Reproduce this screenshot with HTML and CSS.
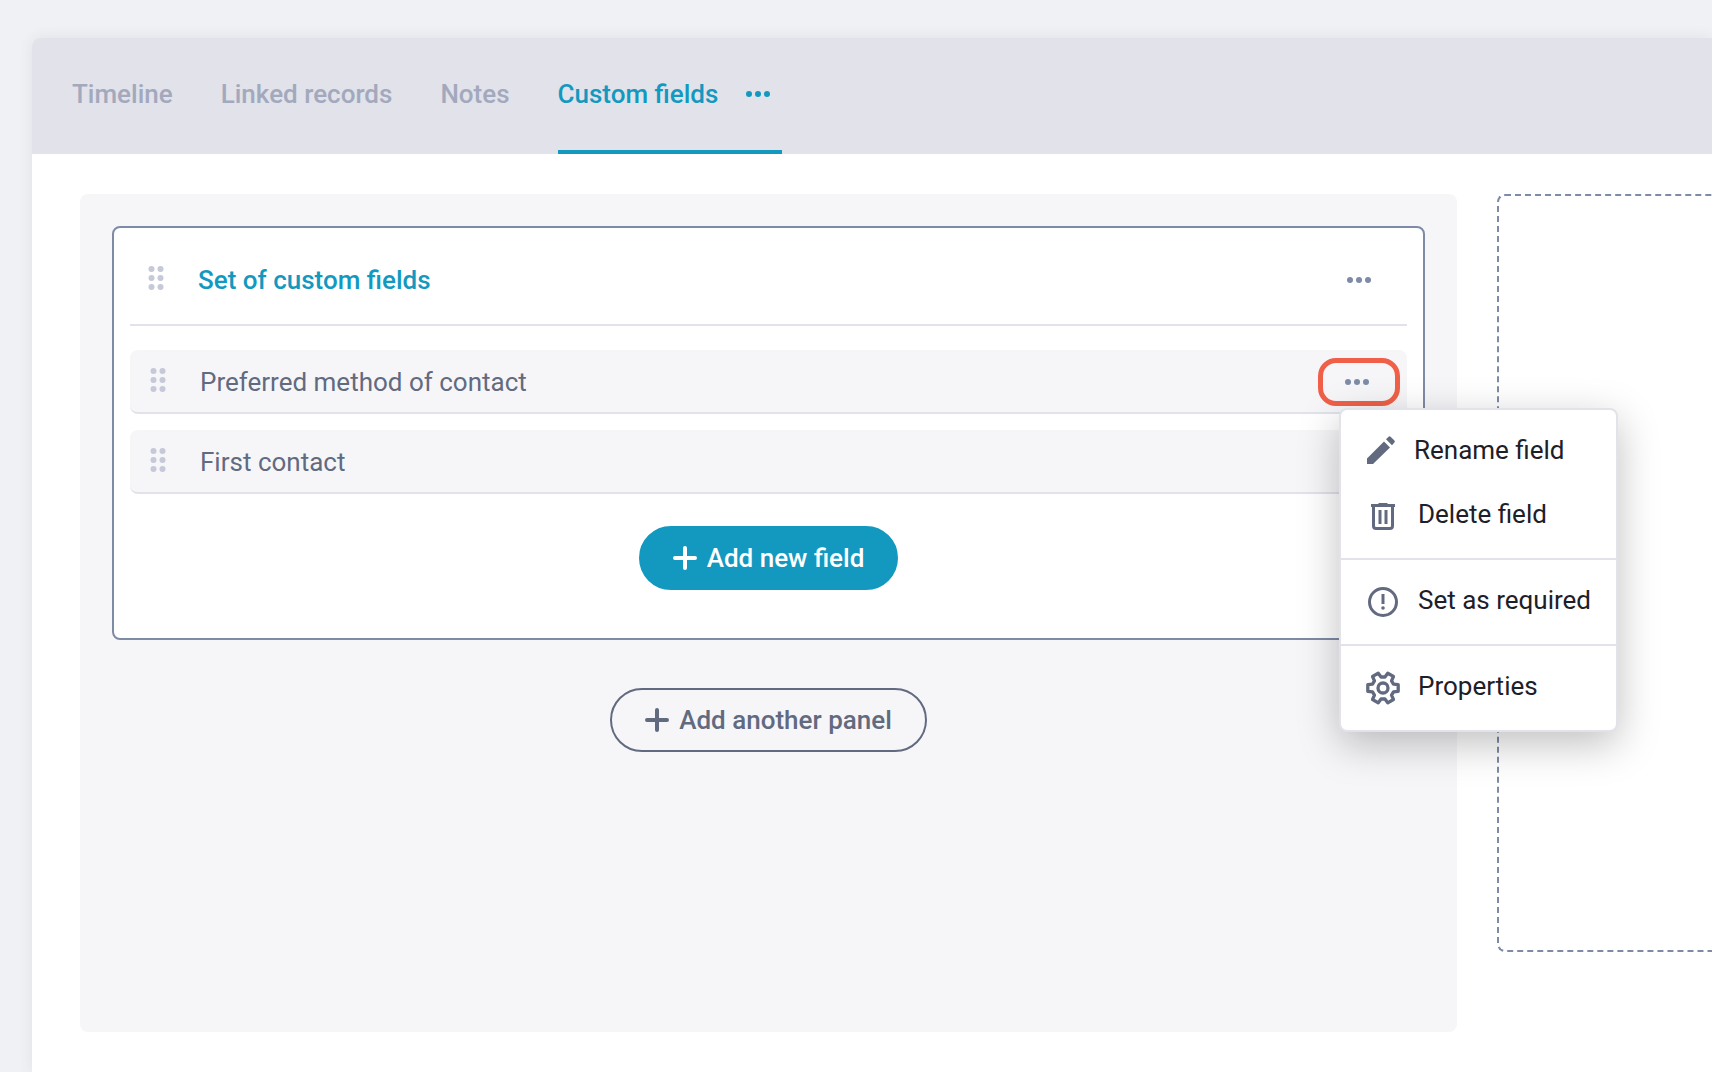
FILE: index.html
```html
<!DOCTYPE html>
<html lang="en">
<head>
<meta charset="utf-8">
<meta name="viewport" content="width=device-width, initial-scale=1">
<title>Custom fields</title>
<link rel="stylesheet" href="styles.css">
</head>
<body>
<svg class="sprite" aria-hidden="true">
  <symbol id="dots" viewBox="0 0 24 6"><circle cx="3" cy="3" r="3"/><circle cx="12" cy="3" r="3"/><circle cx="21" cy="3" r="3"/></symbol>
  <symbol id="grip" viewBox="0 0 16 24"><circle cx="3.500" cy="3" r="3"/><circle cx="12.500" cy="3" r="3"/><circle cx="3.500" cy="12" r="3"/><circle cx="12.500" cy="12" r="3"/><circle cx="3.500" cy="21" r="3"/><circle cx="12.500" cy="21" r="3"/></symbol>
  <symbol id="plus" viewBox="0 0 24 24"><path d="M12 2v20M2 12h20" fill="none" stroke="currentColor" stroke-width="4" stroke-linecap="round"/></symbol>
</svg>
<main class="card">
  <nav class="tabs" aria-label="Record sections">
    <a class="tab" href="#timeline">Timeline</a>
    <a class="tab" href="#linked">Linked records</a>
    <a class="tab" href="#notes">Notes</a>
    <div class="tab tab-active">
      <a href="#custom" aria-current="page">Custom fields</a>
      <button class="more" type="button" aria-label="Tab options"><svg class="dots"><use href="#dots"/></svg></button>
    </div>
  </nav>
  <div class="workspace">
    <section class="board">
      <div class="panel">
        <header class="panel-head">
          <svg class="grip"><use href="#grip"/></svg>
          <h2 class="panel-title">Set of custom fields</h2>
          <button class="more panel-more" type="button" aria-label="Panel options"><svg class="dots"><use href="#dots"/></svg></button>
        </header>
        <ul class="fields">
          <li class="field">
            <svg class="grip"><use href="#grip"/></svg>
            <span class="field-name">Preferred method of contact</span>
            <div class="field-actions">
              <button class="more more-open" type="button" aria-label="Field options" aria-expanded="true"><svg class="dots"><use href="#dots"/></svg></button>
              <div class="menu" role="menu">
                <div class="menu-group">
                  <button class="menu-item" type="button" role="menuitem">
                    <svg class="icon-pencil" viewBox="0 0 30 34"><path fill="currentColor" d="M1 31v-5.500L18 8.500l6 6L7 31zM20 6.300l2.600-2.600q1-1 2 0l3.800 3.800q1 1 0 2L26 12.200z"/></svg>
                    Rename field
                  </button>
                  <button class="menu-item" type="button" role="menuitem">
                    <svg class="icon" viewBox="0 0 34 34"><g fill="none" stroke="currentColor"><path stroke-width="3" d="M5 6.500h24M7.500 7v20q0 2.500 2.500 2.500h14q2.500 0 2.500-2.500V7"/><path stroke-width="3" d="M14 11v14M20 11v14"/><path stroke-width="2" d="M12.500 5h9"/></g></svg>
                    Delete field
                  </button>
                </div>
                <div class="menu-group">
                  <button class="menu-item" type="button" role="menuitem">
                    <svg class="icon" viewBox="0 0 34 34"><g fill="none" stroke="currentColor" stroke-width="3"><circle cx="17" cy="17" r="13.500"/><path d="M17 9v10"/></g><circle cx="17" cy="23" r="1.800" fill="currentColor"/></svg>
                    Set as required
                  </button>
                </div>
                <div class="menu-group">
                  <button class="menu-item" type="button" role="menuitem">
                    <svg class="icon" viewBox="-17 -17 34 34"><g fill="none" stroke="currentColor" stroke-width="3.300" stroke-linejoin="round"><circle r="5"/><path d="M10.500-3.800 15.200-3.300 15.200 3.300 10.500 3.800 8.540 7.190 10.460 11.510 4.740 14.810 1.960 10.990-1.960 10.990-4.740 14.810-10.460 11.510-8.540 7.190-10.500 3.800-15.200 3.300-15.200-3.300-10.500-3.800-8.540-7.190-10.460-11.510-4.740-14.810-1.960-10.990 1.960-10.990 4.740-14.810 10.460-11.510 8.540-7.190z"/></g></svg>
                    Properties
                  </button>
                </div>
              </div>
            </div>
          </li>
          <li class="field">
            <svg class="grip"><use href="#grip"/></svg>
            <span class="field-name">First contact</span>
          </li>
        </ul>
        <button class="pill pill-solid" type="button"><svg class="plus"><use href="#plus"/></svg>Add new field</button>
      </div>
      <button class="pill pill-outline" type="button"><svg class="plus"><use href="#plus"/></svg>Add another panel</button>
    </section>
    <aside class="dropzone" aria-label="Empty column"></aside>
  </div>
</main>
</body>
</html>
```

FILE: styles.css
```css
* {
  box-sizing: border-box;
}

body {
  margin: 0;
  min-height: 100vh;
  display: flex;
  flex-direction: column;
  padding: 38px 0 0 32px;
  background: #eff1f5;
  color: #626a80;
  font-family: Roboto, "Liberation Sans", sans-serif;
  font-size: 26px;
  line-height: 32px;
  overflow-x: hidden;
}

button {
  font: inherit;
  color: inherit;
  background: none;
  border: 0;
  padding: 0;
  cursor: pointer;
}

a {
  color: inherit;
  text-decoration: none;
}

svg {
  display: block;
  flex: none;
}

.sprite {
  position: absolute;
  width: 0;
  height: 0;
}

.card {
  flex: 1;
  background: #fff;
  border-radius: 8px 0 0 0;
  box-shadow: 0 0 16px rgba(0, 0, 0, 0.07);
}

.tabs {
  display: flex;
  gap: 48px;
  height: 116px;
  padding-left: 40px;
  background: #e1e2ea;
  border-radius: 8px 0 0 0;
  color: #a3a9bd;
  font-weight: 500;
}

.tab {
  display: flex;
  align-items: center;
  border-bottom: 4px solid transparent;
}

.tab-active {
  gap: 16px;
  color: #1399bf;
  border-bottom-color: #1399bf;
}

.more {
  display: flex;
  align-items: center;
  justify-content: center;
  width: 48px;
  height: 48px;
  color: #7e8ba6;
}

.tab-active .more {
  color: inherit;
}

.dots {
  width: 24px;
  height: 6px;
  fill: currentColor;
}

.workspace {
  display: grid;
  grid-template-columns: minmax(0, 1fr) 215px;
  column-gap: 40px;
  align-items: start;
  padding: 40px 0 40px 48px;
}

.board {
  display: flex;
  flex-direction: column;
  align-items: center;
  gap: 48px;
  min-height: 838px;
  padding: 32px;
  background: #f6f6f9;
  border-radius: 8px;
}

.panel {
  display: flex;
  flex-direction: column;
  align-items: center;
  width: 100%;
  padding: 0 16px 48px;
  background: #fff;
  border: 2px solid #7e8ba6;
  border-radius: 8px;
}

.panel-head {
  display: flex;
  align-items: center;
  width: 100%;
  height: 98px;
  padding: 8px 24px 0 18px;
  border-bottom: 2px solid #e1e2ea;
}

.grip {
  width: 16px;
  height: 24px;
  margin-bottom: 4px;
  fill: #c5c9d8;
}

.panel-title {
  flex: 1;
  margin: 0 0 0 34px;
  color: #1399bf;
  font-size: 26px;
  font-weight: 500;
}

.fields {
  display: grid;
  gap: 16px;
  width: 100%;
  margin: 24px 0 32px;
  padding: 0;
  list-style: none;
}

.field {
  display: flex;
  align-items: center;
  height: 64px;
  padding: 2px 7px 0 20px;
  background: #f6f6f9;
  border-bottom: 2px solid #e1e2ea;
  border-radius: 8px;
}

.field-name {
  flex: 1;
  margin-left: 34px;
}

.field-actions {
  position: relative;
}

.more-open {
  width: 82px;
  padding-right: 4px;
  border: 5px solid #f06048;
  border-radius: 18px;
}

.menu {
  position: absolute;
  top: 50px;
  left: 21px;
  z-index: 1;
  background: #fff;
  border: 2px solid #e1e2ea;
  border-radius: 8px;
  box-shadow: 0 12px 40px rgba(0, 0, 0, 0.25);
  color: #1d2028;
}

.menu-group {
  padding: 8px 0 12px;
}

.menu-group + .menu-group {
  border-top: 2px solid #e1e2ea;
}

.menu-item {
  display: flex;
  align-items: center;
  gap: 18px;
  width: 100%;
  height: 64px;
  padding: 0 25px;
  white-space: nowrap;
}

.icon,
.icon-pencil {
  width: 34px;
  height: 34px;
  color: #626a80;
}

.icon {
  margin-top: 4px;
}

.icon-pencil {
  width: 30px;
}

.pill {
  display: flex;
  align-items: center;
  gap: 10px;
  height: 64px;
  padding: 0 32px;
  border: 2px solid #626a80;
  border-radius: 32px;
  font-weight: 500;
}

.pill-solid {
  background: #1399bf;
  border-color: #1399bf;
  color: #fff;
}

.pill-outline {
  padding: 0 33px;
}

.plus {
  width: 24px;
  height: 24px;
}

.dropzone {
  min-height: 758px;
  border: 2px dashed #7e8ba6;
  border-right: 0;
  border-radius: 8px 0 0 8px;
}
```
